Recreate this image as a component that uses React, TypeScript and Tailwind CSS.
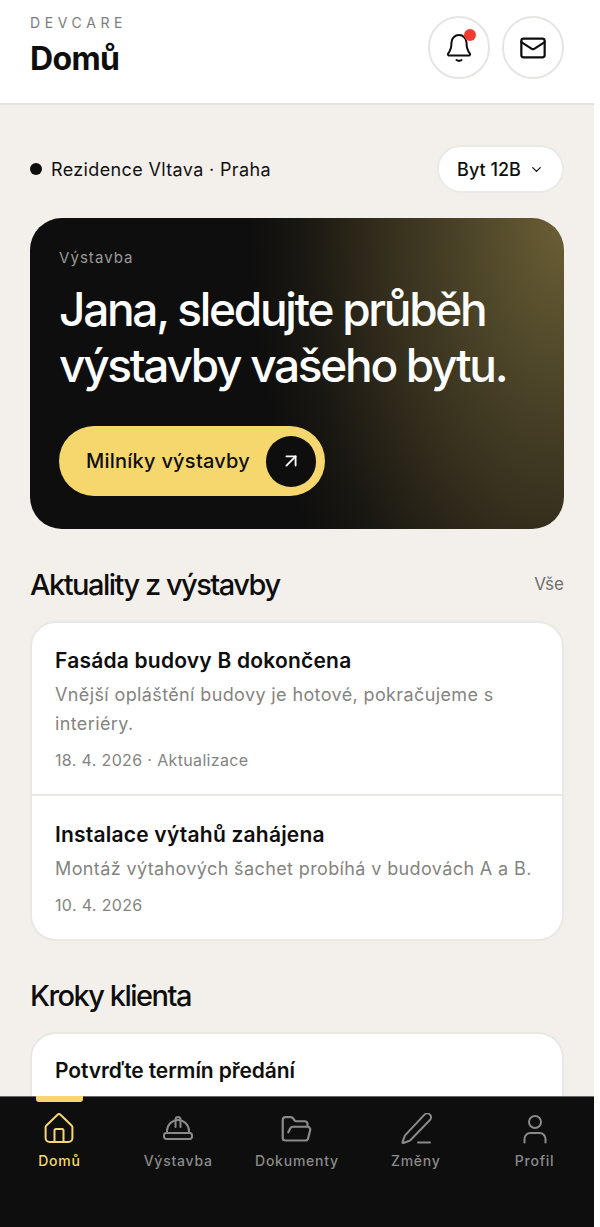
import React from "react";
import { ChevronDown, Mail, ArrowUpRight, FolderOpen } from "lucide-react";

const sans = "font-['Inter','Noto_Sans',sans-serif]";

function BellIcon() {
  return (
    <svg width="28" height="30" viewBox="0 0 28 30" fill="none" stroke="currentColor" strokeWidth="2" strokeLinecap="round" strokeLinejoin="round">
      <path d="M14 2a7.5 7.5 0 0 0-7.5 7.5c0 5.5-1 8-3.3 11a1.2 1.2 0 0 0 1 2h19.6a1.2 1.2 0 0 0 1-2c-2.3-3-3.3-5.5-3.3-11A7.5 7.5 0 0 0 14 2Z" />
      <path d="M11.5 27c1.4 1 3.6 1 5 0" />
    </svg>
  );
}

function HouseIcon() {
  return (
    <svg width="32" height="32" viewBox="0 0 32 32" fill="none" stroke="currentColor" strokeWidth="2" strokeLinecap="round" strokeLinejoin="round">
      <path d="M3.4 12.4 14.8 1.6a1.7 1.7 0 0 1 2.4 0l11.4 10.8a2.4 2.4 0 0 1 .8 1.8V25a4 4 0 0 1-4 4H6.6a4 4 0 0 1-4-4V14.2a2.4 2.4 0 0 1 .8-1.8Z" />
      <path d="M11.5 29V17.5a1.5 1.5 0 0 1 1.5-1.5h6a1.5 1.5 0 0 1 1.5 1.5V29" />
    </svg>
  );
}

function HardHatIcon() {
  return (
    <svg width="32" height="32" viewBox="0 0 32 32" fill="none" stroke="currentColor" strokeWidth="2" strokeLinecap="round" strokeLinejoin="round">
      <path d="M5 20v-2a11 11 0 0 1 22 0v2" />
      <path d="M13.5 14V6.5a2.5 2.5 0 0 1 5 0V14" />
      <rect x="2" y="20" width="28" height="6" rx="2.4" />
    </svg>
  );
}

function PenIcon() {
  return (
    <svg width="32" height="32" viewBox="0 0 32 32" fill="none" stroke="currentColor" strokeWidth="2" strokeLinecap="round" strokeLinejoin="round">
      <path d="M24.5 1.6a3.8 3.8 0 0 1 5.4 5.4L10.6 27a4 4 0 0 1-1.7 1l-5.6 2a.6.6 0 0 1-.8-.8l2-5.6a4 4 0 0 1 1-1.7Z" />
      <path d="M18 29.5h12" />
    </svg>
  );
}

function PersonIcon() {
  return (
    <svg width="32" height="32" viewBox="0 0 32 32" fill="none" stroke="currentColor" strokeWidth="2" strokeLinecap="round" strokeLinejoin="round">
      <circle cx="16" cy="9" r="6" />
      <path d="M5.5 29.5V26a6 6 0 0 1 6-6h9a6 6 0 0 1 6 6v3.5" />
    </svg>
  );
}

function NavItem({ label, icon, active }: { label: string; icon: React.ReactNode; active?: boolean }) {
  return (
    <div className={`relative flex flex-col items-center pt-[16px] ${active ? "text-[#f5d76e]" : "text-[#8a8a8a]"}`}>
      {active && <span className="absolute top-[-1px] left-[36px] h-[6px] w-[47px] rounded-b-[3px] bg-[#f5d76e]" />}
      <span className="flex h-[32px] items-center justify-center">{icon}</span>
      <span className="mt-[6px] text-[14px] leading-[20px] font-[550] tracking-[0.055em]">{label}</span>
    </div>
  );
}

export default function App() {
  return (
    <div className={`h-[1227px] w-[600px] overflow-hidden bg-white ${sans}`}>
      <div className="flex h-full w-[594px] flex-col bg-[#f3f0eb]">
        <header className="flex h-[105px] shrink-0 items-start justify-between border-b-2 border-[#e4e3e0] bg-white px-[30px] pt-[16px]">
          <div>
            <div className="text-[14px] leading-[14px] tracking-[0.33em] text-[#7c7c7c]">DEVCARE</div>
            <h1 className="mt-[7px] text-[32px] leading-[44px] font-bold tracking-[-0.02em] text-[#0e0e0e]">Domů</h1>
          </div>
          <div className="flex gap-[12px]">
            <button className="relative flex h-[63px] w-[62px] items-center justify-center rounded-full border-2 border-[#e6e5e3] bg-white text-[#0e0e0e]">
              <BellIcon />
              <span className="absolute top-[11px] right-[12px] h-[12px] w-[12px] rounded-full bg-[#f23b30]" />
            </button>
            <button className="flex h-[63px] w-[62px] items-center justify-center rounded-full border-2 border-[#e6e5e3] bg-white text-[#0e0e0e]">
              <Mail size={28} strokeWidth={1.9} />
            </button>
          </div>
        </header>

        <main className="min-h-0 flex-1 overflow-hidden px-[30px] pt-[40px]">
          <div className="flex h-[48px] items-center justify-between">
            <div className="flex items-center gap-[9px] text-[18px] tracking-[0.02em] text-[#111111]">
              <span className="h-[12px] w-[12px] rounded-full bg-[#0e0e0e]" />
              Rezidence Vltava · Praha
            </div>
            <button className="flex h-[48px] w-[127px] items-center justify-center gap-[8px] rounded-full border-2 border-[#eaeae8] bg-white text-[18px] font-[550] text-[#0e0e0e]">
              Byt 12B
              <ChevronDown size={15} strokeWidth={2} />
            </button>
          </div>

          <section className="mt-[25px] h-[311px] rounded-[32px] bg-[#0e0e0e] bg-[radial-gradient(ellipse_64%_190%_at_100%_0%,#6b5f35_0%,#50482a_25%,#352f1d_52%,#1a1812_76%,#0e0e0e_92%)] px-[29px] pt-[30px]">
            <div className="text-[15px] leading-[20px] tracking-[0.07em] text-[#9a9a95]">Výstavba</div>
            <h2 className="mt-[13px] text-[46px] leading-[56px] font-medium tracking-[-0.05em] whitespace-nowrap text-white">
              Jana, sledujte průběh
              <br />
              výstavby vašeho bytu.
            </h2>
            <button className="mt-[33px] flex h-[70px] w-[266px] items-center justify-between rounded-full bg-[#f5d76e] pr-[9px] pl-[27px] text-[20px] font-[550] tracking-[0.012em] text-[#0e0e0e]">
              Milníky výstavby
              <span className="flex h-[51px] w-[50px] items-center justify-center rounded-full bg-[#0e0e0e] text-white">
                <ArrowUpRight size={22} strokeWidth={2} />
              </span>
            </button>
          </section>

          <div className="mt-[35px] flex h-[42px] items-center justify-between">
            <h2 className="text-[29px] font-medium tracking-[-0.052em] text-[#0e0e0e]">Aktuality z výstavby</h2>
            <span className="text-[17px] text-[#6f6f6c]">Vše</span>
          </div>

          <div className="mt-[15px] overflow-hidden rounded-[26px] border-2 border-[#e9e8e5] bg-white">
            <article className="h-[173px] border-b-2 border-[#e9e8e5] px-[23px] pt-[23px]">
              <h3 className="text-[21px] leading-[30px] font-semibold tracking-[0.01em] text-[#0e0e0e]">Fasáda budovy B dokončena</h3>
              <p className="mt-[4px] text-[18px] leading-[29px] tracking-[0.021em] text-[#84847f]">Vnější opláštění budovy je hotové, pokračujeme s interiéry.</p>
              <p className="mt-[10px] text-[16px] leading-[24px] tracking-[0.022em] text-[#84847f]">18. 4. 2026 · Aktualizace</p>
            </article>
            <article className="h-[143px] px-[23px] pt-[24px]">
              <h3 className="text-[21px] leading-[30px] font-semibold tracking-[0.01em] text-[#0e0e0e]">Instalace výtahů zahájena</h3>
              <p className="mt-[4px] text-[18px] leading-[29px] tracking-[0.021em] whitespace-nowrap text-[#84847f]">Montáž výtahových šachet probíhá v budovách A a B.</p>
              <p className="mt-[10px] text-[16px] leading-[24px] tracking-[0.022em] text-[#84847f]">10. 4. 2026</p>
            </article>
          </div>

          <h2 className="mt-[34px] text-[29px] leading-[42px] font-medium tracking-[-0.052em] text-[#0e0e0e]">Kroky klienta</h2>

          <div className="mt-[15px] rounded-[26px] border-2 border-[#e9e8e5] bg-white px-[23px] pt-[22px]">
            <h3 className="text-[21px] leading-[30px] font-semibold tracking-[-0.005em] text-[#0e0e0e]">Potvrďte termín předání</h3>
            <p className="mt-[4px] text-[18px] leading-[29px] tracking-[0.021em] text-[#84847f]">Prosím vyberte termín přes portál.</p>
          </div>
        </main>

        <nav className="grid h-[131px] shrink-0 grid-cols-5 border-t border-[#6a6a6a] bg-[#0e0e0e]">
          <NavItem label="Domů" icon={<HouseIcon />} active />
          <NavItem label="Výstavba" icon={<HardHatIcon />} />
          <NavItem label="Dokumenty" icon={<FolderOpen size={33} strokeWidth={1.6} />} />
          <NavItem label="Změny" icon={<PenIcon />} />
          <NavItem label="Profil" icon={<PersonIcon />} />
        </nav>
      </div>
    </div>
  );
}
